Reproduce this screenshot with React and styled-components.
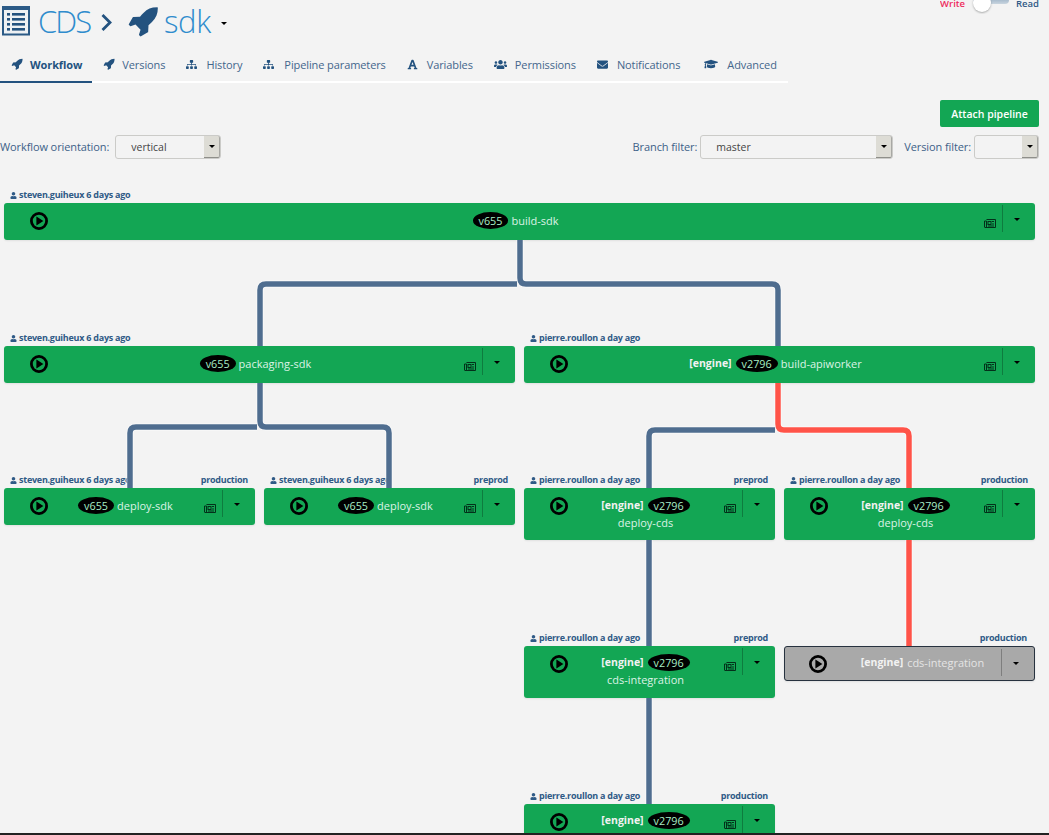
import styled, { createGlobalStyle } from "styled-components";
import {
  FaSitemap,
  FaFont,
  FaUsers,
  FaEnvelope,
  FaGraduationCap,
  FaUser,
} from "react-icons/fa";

const GlobalStyle = createGlobalStyle`
  html, body {
    margin: 0;
    padding: 0;
    background: #f3f3f3;
    font-family: "Open Sans", "Noto Sans", sans-serif;
    overflow: hidden;
  }
`;

const Page = styled.div`
  height: 835px;
  overflow: hidden;
  display: flex;
  flex-direction: column;
  position: relative;
`;

const Header = styled.header`
  display: flex;
  justify-content: space-between;
  align-items: flex-start;
  height: 44px;
  padding-right: 10px;
`;

const Title = styled.div`
  display: flex;
  align-items: center;
  height: 36px;
  margin-top: 3px;
  color: #2f8ccd;
  font-size: 31px;
  line-height: 36px;
  font-weight: 300;
  padding-left: 2px;
`;

const Brand = styled.span`
  letter-spacing: -2px;
  margin-left: 8px;
`;

const PipelineName = styled.span`
  letter-spacing: -0.4px;
  margin-left: 5px;
`;

const Chevron = styled.svg`
  margin: 2px 15px 0 11px;
`;

const Caret = styled.span`
  display: inline-block;
  width: 0;
  height: 0;
  border-left: 3px solid transparent;
  border-right: 3px solid transparent;
  border-top: 3.5px solid #000;
`;

const TitleCaret = styled(Caret)`
  margin: 5px 0 0 10px;
`;

const ModeToggle = styled.div`
  display: flex;
  align-items: flex-start;
  font-size: 9.5px;
  height: 14px;
  overflow: hidden;
`;

const ModeLabel = styled.span`
  color: ${(p) => p.$color};
  line-height: 7px;
  font-weight: 600;
`;

const Track = styled.span`
  display: block;
  position: relative;
  width: 36px;
  height: 4px;
  margin: 0 7px 0 8px;
  background: linear-gradient(#a9bccd, #c9d5df);
  border-radius: 0 0 4px 4px;
`;

const Knob = styled.span`
  position: absolute;
  left: 0;
  top: -6px;
  width: 18px;
  height: 18px;
  border-radius: 50%;
  background: #fff;
  box-shadow: 0 1px 2px rgba(34, 36, 38, 0.35);
`;

const Tabs = styled.nav`
  display: flex;
  width: 788px;
  height: 39px;
  box-sizing: border-box;
  border-bottom: 2px solid #fff;
`;

const Tab = styled.a`
  display: flex;
  align-items: center;
  height: 39px;
  margin-bottom: -2px;
  box-sizing: border-box;
  padding: 3px ${(p) => p.$pad}px 0 11px;
  font-size: 11px;
  color: ${(p) => (p.$active ? "#23527f" : "#43668c")};
  font-weight: ${(p) => (p.$active ? 700 : 400)};
  border-bottom: 2px solid ${(p) => (p.$active ? "#23527f" : "transparent")};
  white-space: nowrap;
  letter-spacing: -0.1px;
`;

const TabIcon = styled.span`
  display: flex;
  flex: none;
  width: ${(p) => p.$box}px;
  color: #23527f;
  font-size: ${(p) => p.$size}px;
`;

const ActionBar = styled.div`
  display: flex;
  justify-content: flex-end;
  padding: 17px 10px 0 0;
`;

const AttachButton = styled.button`
  width: 99px;
  height: 27px;
  padding: 0;
  border: none;
  border-radius: 2px;
  background: #13a654;
  color: #fff;
  font: 600 10.5px "Open Sans", sans-serif;
`;

const Filters = styled.div`
  display: flex;
  align-items: center;
  height: 24px;
  margin-top: 8px;
  padding-right: 10px;
`;

const FilterLabel = styled.label`
  font-size: 11px;
  line-height: 24px;
  height: 24px;
  color: #3d6188;
  margin-right: ${(p) => p.$right}px;
  white-space: nowrap;
  letter-spacing: -0.1px;
`;

const Select = styled.div`
  display: flex;
  justify-content: space-between;
  align-items: stretch;
  box-sizing: border-box;
  width: ${(p) => p.$width}px;
  height: 24px;
  border: 1px solid #cbcbc8;
  border-radius: 3px;
  margin-right: ${(p) => p.$right}px;
  color: #444;
  font-size: 10.5px;
  line-height: 22px;
  padding-left: 15px;
  background: #f3f3f3;
`;

const SelectArrow = styled.span`
  display: flex;
  align-items: center;
  justify-content: center;
  width: 15px;
  background: #dddcd5;
  border-bottom: 1px solid #8f8f8a;
  border-right: 1px solid #a8a8a4;
  border-radius: 0 2px 2px 0;
`;

const Spacer = styled.div`
  flex: 1;
`;

const Canvas = styled.section`
  position: relative;
  height: 655px;
  margin-top: 21px;
`;

const Links = styled.svg`
  position: absolute;
  inset: 0;
  z-index: 2;
  pointer-events: none;
  overflow: visible;
`;

const Node = styled.div`
  position: absolute;
  left: ${(p) => p.$x}px;
  top: ${(p) => p.$y}px;
  width: ${(p) => p.$w}px;
  height: ${(p) => p.$h}px;
  box-sizing: border-box;
  border-radius: 3px;
  background: ${(p) => (p.$idle ? "#a9a9a9" : "#13a654")};
  border: ${(p) => (p.$idle ? "1px solid #27323f" : "none")};
  box-shadow: 0 1px 2px rgba(0, 0, 0, 0.08);
  display: flex;
  flex-direction: column;
  align-items: center;
  padding: ${(p) => p.$top}px ${(p) => (p.$idle ? "0 0 26px" : "8px 0 0")};
`;

const NodeLabel = styled.div`
  position: absolute;
  bottom: 100%;
  left: 6px;
  right: 7px;
  display: flex;
  justify-content: space-between;
  align-items: center;
  margin-bottom: ${(p) => (p.$idle ? 4 : 3)}px;
  font-size: 9px;
  font-weight: 700;
  line-height: 10px;
  color: #2f5a86;
  letter-spacing: -0.25px;
  white-space: nowrap;
`;

const Author = styled.span`
  display: flex;
  align-items: center;
  gap: 2px;

  svg {
    font-size: 7px;
  }
`;

const PlayButton = styled.svg`
  position: absolute;
  left: ${(p) => (p.$idle ? 24 : 26)}px;
  top: ${(p) => (p.$idle ? 8 : 9)}px;
`;

const TitleLine = styled.div`
  display: flex;
  align-items: center;
  gap: 3px;
  height: 18px;
  font-size: 11px;
  color: ${(p) => (p.$idle ? "#e4e4e4" : "#dcf3e6")};
  white-space: nowrap;
`;

const NameLine = styled.div`
  height: 16px;
  line-height: 17px;
  font-size: 11px;
  color: #dcf3e6;
  white-space: nowrap;
`;

const Application = styled.strong`
  color: #f2f2f2;
  font-size: 10.5px;
  font-weight: 700;
  margin-right: 1px;
`;

const Version = styled.span`
  display: inline-block;
  height: 17px;
  line-height: 17px;
  padding: 0 6px;
  border-radius: 50%;
  background: #000;
  color: #a8eec6;
  font-size: 10.8px;
`;

const NewsIcon = styled.svg`
  position: absolute;
  right: 39px;
  top: 16px;
`;

const Divider = styled.span`
  position: absolute;
  right: 32px;
  top: 2px;
  height: 27px;
  border-left: 1px solid rgba(0, 0, 0, 0.25);
`;

const NodeCaret = styled(Caret)`
  position: absolute;
  right: 15px;
  top: 15px;
`;

const BottomEdge = styled.div`
  position: absolute;
  left: 0;
  right: 0;
  bottom: 0;
  height: 2px;
  background: #222;
  z-index: 3;
`;

const RocketIcon = ({ size }) => (
  <svg width={size} height={size} viewBox="0 0 1792 1792" fill="currentColor">
    <path d="M1504 448q0 40-28 68t-68 28-68-28-28-68 28-68 68-28 68 28 28 68zm224-288q0 249-75.500 430.500t-253.500 360.500q-81 80-195 176l-20 379q-2 16-16 26l-384 224q-7 4-16 4-12 0-23-9l-64-64q-13-14-8-32l85-276-281-281-276 85q-3 1-9 1-14 0-23-9l-64-64q-17-19-5-39l224-384q10-14 26-16l379-20q96-114 176-195 188-187 358-258t431-71q14 0 24 9.500t10 22.500z" />
  </svg>
);

const TitleRocket = styled.span`
  display: flex;
  color: #23527f;
`;

const ListIcon = () => (
  <svg width="28" height="30" viewBox="0 0 28 30">
    <rect x="1" y="1.500" width="26" height="27" fill="#eef1f4" stroke="#2b5a86" strokeWidth="2" />
    <rect x="0" y="0" width="28" height="4" fill="#2b5a86" />
    {[7, 12, 17, 22].map((y) => (
      <g key={y} fill="#23527f">
        <rect x="5" y={y} width="3" height="2.600" />
        <rect x="10" y={y} width="13" height="2.600" />
      </g>
    ))}
  </svg>
);

const NewspaperGlyph = () => (
  <NewsIcon width="12" height="9" viewBox="0 0 12 9">
    <path d="M2.500 .500 H11.500 V8.500 H1 Q.500 8.500 .500 8 V2 H2.500 V8" fill="none" stroke="#03301a" strokeWidth="1" />
    <rect x="4" y="2.500" width="3" height="3" fill="none" stroke="#03301a" strokeWidth="1" />
    <path d="M8 2.500 H10 M8 5 H10 M4 7 H10" stroke="#03301a" strokeWidth="1" />
  </NewsIcon>
);

const rocket = <RocketIcon size={12} />;

const TABS = [
  { icon: rocket, text: "Workflow", active: true, box: 19 },
  { icon: rocket, text: "Versions", box: 19 },
  { icon: <FaSitemap />, text: "History", box: 20 },
  { icon: <FaSitemap />, text: "Pipeline parameters", box: 21 },
  { icon: <FaFont />, text: "Variables", box: 20 },
  { icon: <FaUsers />, text: "Permissions", box: 21, size: 13 },
  { icon: <FaEnvelope />, text: "Notifications", box: 20, pad: 13 },
  { icon: <FaGraduationCap />, text: "Advanced", box: 23, size: 14 },
];

const STEVEN = "steven.guiheux 6 days ago";
const PIERRE = "pierre.roullon a day ago";

// coordinates on the canvas: page y minus 180
const NODES = [
  { x: 4, y: 23, w: 1031, h: 37, author: STEVEN, version: "v655", name: "build-sdk" },
  { x: 4, y: 166, w: 511, h: 37, author: STEVEN, version: "v655", name: "packaging-sdk" },
  { x: 524, y: 166, w: 511, h: 37, author: PIERRE, app: "[engine]", version: "v2796", name: "build-apiworker" },
  { x: 4, y: 308, w: 251, h: 37, author: STEVEN, env: "production", version: "v655", name: "deploy-sdk" },
  { x: 264, y: 308, w: 251, h: 37, author: STEVEN, env: "preprod", version: "v655", name: "deploy-sdk" },
  { x: 524, y: 308, w: 251, h: 52, author: PIERRE, env: "preprod", app: "[engine]", version: "v2796", name: "deploy-cds", stacked: true },
  { x: 784, y: 308, w: 251, h: 52, author: PIERRE, env: "production", app: "[engine]", version: "v2796", name: "deploy-cds", stacked: true },
  { x: 524, y: 466, w: 251, h: 52, top: 7, author: PIERRE, env: "preprod", app: "[engine]", version: "v2796", name: "cds-integration", stacked: true },
  { x: 784, y: 466, w: 251, h: 35, top: 6, env: "production", app: "[engine]", name: "cds-integration", idle: true },
  { x: 524, y: 624, w: 251, h: 52, top: 7, author: PIERRE, env: "production", app: "[engine]", version: "v2796" },
];

const BLUE = "#4f6d8f";
const RED = "#ff5348";

const LINKS = [
  { color: BLUE, d: "M520 60 V98 Q520 104 526 104 H772 Q778 104 778 110 V166" },
  { color: BLUE, d: "M517 104 H266 Q260 104 260 110 V166" },
  { color: BLUE, d: "M260 203 V241 Q260 247 266 247 H383 Q389 247 389 253 V308" },
  { color: BLUE, d: "M257 247 H136 Q130 247 130 253 V308" },
  { color: BLUE, d: "M775 250 H655 Q649 250 649 256 V308" },
  { color: BLUE, d: "M649 360 V466" },
  { color: BLUE, d: "M649 518 V624" },
  { color: RED, d: "M778 203 V244 Q778 250 784 250 H903 Q909 250 909 256 V308" },
  { color: RED, d: "M909 360 V466" },
];

const PlayIcon = ({ idle }) => (
  <PlayButton $idle={idle} width="18" height="18" viewBox="0 0 18 18">
    <circle cx="9" cy="9" r="7.600" fill="none" stroke="#000" strokeWidth="2.800" />
    <path d="M6.400 4.400 L13.400 9 L6.400 13.600 Z" fill="#000" />
  </PlayButton>
);

const PipelineNode = ({ node }) => {
  const { author, env, app, version, name, stacked, idle, top = 8 } = node;
  return (
    <Node $x={node.x} $y={node.y} $w={node.w} $h={node.h} $idle={idle} $top={top}>
      <NodeLabel $idle={idle}>
        <Author>
          {author && <FaUser />}
          {author}
        </Author>
        <span>{env}</span>
      </NodeLabel>
      <PlayIcon idle={idle} />
      <TitleLine $idle={idle}>
        {app && <Application>{app}</Application>}
        {version && <Version>{version}</Version>}
        {!stacked && name}
      </TitleLine>
      {stacked && <NameLine>{name}</NameLine>}
      {!idle && <NewspaperGlyph />}
      <Divider />
      <NodeCaret />
    </Node>
  );
};

const App = () => (
  <Page>
    <GlobalStyle />
    <Header>
      <Title>
        <ListIcon />
        <Brand>CDS</Brand>
        <Chevron width="11" height="17" viewBox="0 0 11 17">
          <path d="M1.500 1 L9 8.500 L1.500 16" fill="none" stroke="#23527f" strokeWidth="2.800" />
        </Chevron>
        <TitleRocket>
          <RocketIcon size={32} />
        </TitleRocket>
        <PipelineName>sdk</PipelineName>
        <TitleCaret />
      </Title>
      <ModeToggle>
        <ModeLabel $color="#ee2a5e">Write</ModeLabel>
        <Track>
          <Knob />
        </Track>
        <ModeLabel $color="#2f5a86">Read</ModeLabel>
      </ModeToggle>
    </Header>
    <Tabs>
      {TABS.map((tab) => (
        <Tab key={tab.text} $active={tab.active} $pad={tab.pad || 10}>
          <TabIcon $box={tab.box} $size={tab.size || 11}>
            {tab.icon}
          </TabIcon>
          {tab.text}
        </Tab>
      ))}
    </Tabs>
    <ActionBar>
      <AttachButton>Attach pipeline</AttachButton>
    </ActionBar>
    <Filters>
      <FilterLabel $right={6}>Workflow orientation:</FilterLabel>
      <Select $width={106} $right={0}>
        vertical
        <SelectArrow>
          <Caret />
        </SelectArrow>
      </Select>
      <Spacer />
      <FilterLabel $right={3}>Branch filter:</FilterLabel>
      <Select $width={193} $right={11}>
        master
        <SelectArrow>
          <Caret />
        </SelectArrow>
      </Select>
      <FilterLabel $right={3}>Version filter:</FilterLabel>
      <Select $width={65} $right={0}>
        <span />
        <SelectArrow>
          <Caret />
        </SelectArrow>
      </Select>
    </Filters>
    <Canvas>
      {NODES.map((node) => (
        <PipelineNode key={`${node.x}-${node.y}`} node={node} />
      ))}
      <Links width="1049" height="655">
        {LINKS.map((link) => (
          <g key={link.d} fill="none">
            <path d={link.d} stroke="#fff" strokeOpacity="0.7" strokeWidth="7" />
            <path d={link.d} stroke={link.color} strokeWidth="5.500" />
          </g>
        ))}
      </Links>
    </Canvas>
    <BottomEdge />
  </Page>
);

export default App;
